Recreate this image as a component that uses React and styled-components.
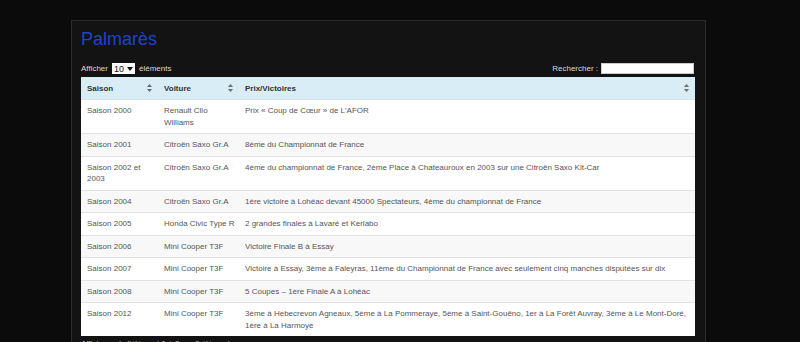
import styled, { createGlobalStyle } from "styled-components"

const rows = [
    { saison: "Saison 2000", voiture: "Renault Clio Williams", prix: "Prix « Coup de Cœur » de L'AFOR" },
    { saison: "Saison 2001", voiture: "Citroën Saxo Gr.A", prix: "8ème du Championnat de France" },
    { saison: "Saison 2002 et 2003", voiture: "Citroën Saxo Gr.A", prix: "4ème du championnat de France, 2ème Place à Chateauroux en 2003 sur une Citroën Saxo Kit-Car" },
    { saison: "Saison 2004", voiture: "Citroën Saxo Gr.A", prix: "1ère victoire à Lohéac devant 45000 Spectateurs, 4ème du championnat de France" },
    { saison: "Saison 2005", voiture: "Honda Civic Type R", prix: "2 grandes finales à Lavaré et Kerlabo" },
    { saison: "Saison 2006", voiture: "Mini Cooper T3F", prix: "Victoire Finale B à Essay" },
    { saison: "Saison 2007", voiture: "Mini Cooper T3F", prix: "Victoire à Essay, 3ème à Faleyras, 11ème du Championnat de France avec seulement cinq manches disputées sur dix" },
    { saison: "Saison 2008", voiture: "Mini Cooper T3F", prix: "5 Coupes – 1ère Finale A à Lohéac" },
    { saison: "Saison 2012", voiture: "Mini Cooper T3F", prix: "3ème à Hebecrevon Agneaux, 5ème à La Pommeraye, 5ème à Saint-Gouëno, 1er à La Forêt Auvray, 3ème à Le Mont-Doré, 1ère à La Harmoye" },
]

const columns = [
    { label: "Saison", width: 77 },
    { label: "Voiture", width: 81 },
    { label: "Prix/Victoires" },
]

function SortIcon() {
    return (
        <svg width="5" height="8" viewBox="0 0 5 8">
            <path d="M2.5 0 L5 3 L0 3 Z" fill="#6b6b6b" />
            <path d="M0 5 L5 5 L2.5 8 Z" fill="#6b6b6b" />
        </svg>
    )
}

function App() {
    return (
        <Page>
            <GlobalStyle />
            <Panel>
                <Title>Palmarès</Title>
                <Controls>
                    <Length>
                        Afficher
                        <Select>
                            10
                            <svg width="6" height="4" viewBox="0 0 6 4"><path d="M0 0 L6 0 L3 4 Z" fill="#111" /></svg>
                        </Select>
                        éléments
                    </Length>
                    <Search>
                        Rechercher :
                        <SearchBox />
                    </Search>
                </Controls>
                <Table>
                    <colgroup>
                        {columns.map((c) => <col key={c.label} style={c.width ? { width: c.width } : undefined} />)}
                    </colgroup>
                    <thead>
                        <tr>
                            {columns.map((c) => (
                                <Th key={c.label}>
                                    <HeadCell>
                                        {c.label}
                                        <SortIcon />
                                    </HeadCell>
                                </Th>
                            ))}
                        </tr>
                    </thead>
                    <tbody>
                        {rows.map((r, i) => (
                            <Row key={r.saison} $striped={i % 2 === 1}>
                                <Td>{r.saison}</Td>
                                <Td>{r.voiture}</Td>
                                <Td>{r.prix}</Td>
                            </Row>
                        ))}
                    </tbody>
                </Table>
                <Info>Affichage de l'élément 1 à 9 sur 9 éléments</Info>
            </Panel>
        </Page>
    )
}

const GlobalStyle = createGlobalStyle`
    html, body {
        margin:0;
        padding:0;
        background:#0b0b0b;
        font-family:"Liberation Sans", Arial, sans-serif;
        overflow:hidden;
    }
`

const Page = styled.div`
    padding-top:20px;
    height:342px;
    box-sizing:border-box;
`

const Panel = styled.div`
    margin-left:71px;
    width:635px;
    box-sizing:border-box;
    background:#131313;
    border:1px solid #2c2c2c;
    padding:8px 10px 20px 9px;
`

const Title = styled.h1`
    margin:0;
    font-size:18px;
    line-height:20px;
    font-weight:normal;
    color:#1d43d0;
`

const Controls = styled.div`
    display:flex;
    justify-content:space-between;
    align-items:center;
    margin-top:13px;
    margin-bottom:2px;
    font-size:8px;
    color:#d8d8d8;
    height:13px;
`

const Length = styled.div`
    display:flex;
    align-items:center;
    gap:4px;
`

const Select = styled.div`
    display:flex;
    align-items:center;
    justify-content:space-between;
    width:23px;
    height:11px;
    box-sizing:border-box;
    padding:0 2px 0 2px;
    background:#fff;
    color:#111;
    font-size:9px;
`

const Search = styled.div`
    display:flex;
    align-items:center;
    gap:3px;
    margin-right:1px;
`

const SearchBox = styled.div`
    width:93px;
    height:11px;
    background:#fff;
    border:1px solid #ccc;
    box-sizing:border-box;
`

const Table = styled.table`
    width:100%;
    table-layout:fixed;
    border-collapse:collapse;
    background:#fff;
    font-size:8px;
`

const Th = styled.th`
    background:#d9edf7;
    color:#333;
    font-weight:bold;
    text-align:left;
    padding:0 6px;
    height:22px;
`

const HeadCell = styled.div`
    display:flex;
    align-items:center;
    justify-content:space-between;
`

const Row = styled.tr`
    background:${({ $striped }) => ($striped ? "#f8f8f8" : "#fff")};
    border-top:1px solid #e2e2e2;
`

const Td = styled.td`
    padding:5px 3px 5px 6px;
    line-height:11.5px;
    color:#565656;
    vertical-align:top;
`

const Info = styled.div`
    margin-top:3px;
    font-size:8px;
    color:#cfcfcf;
`

export default App
